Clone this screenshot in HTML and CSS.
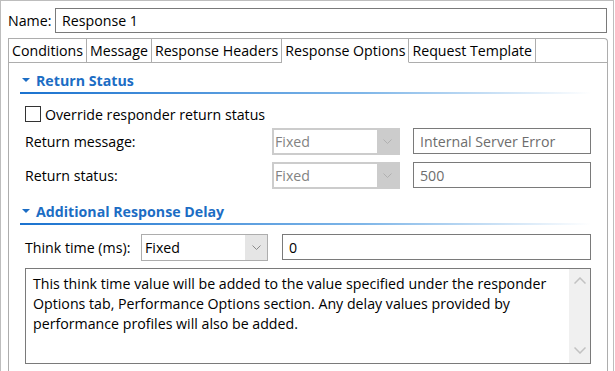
FILE: index.html
```html
<!DOCTYPE html>
<html lang="en">
<head>
<meta charset="UTF-8" />
<title>Response 1</title>
<link rel="stylesheet" href="styles.css">
</head>
<body>
<div class="window">
  <div class="name-row">
    <span class="name-label">Name:</span>
    <div class="field grow">Response 1</div>
  </div>

  <div class="tabs">
    <div class="tab-strip">
      <div class="tab">Conditions</div>
      <div class="tab">Message</div>
      <div class="tab">Response Headers</div>
      <div class="tab active">Response Options</div>
      <div class="tab">Request Template</div>
      <div class="tab-fill"></div>
    </div>

    <div class="panel">
      <div class="section-head"><span class="twisty"></span>Return Status</div>

      <div class="check-row">
        <span class="box"></span>Override responder return status
      </div>

      <div class="form-row status-row first">
        <span class="lbl">Return message:</span>
        <div class="combo disabled">
          <span class="val">Fixed</span>
          <span class="arrow"><svg width="9" height="5" viewBox="0 0 9 5"><polyline points="0.5,0.5 4.5,4.5 8.5,0.5" /></svg></span>
        </div>
        <div class="field grow disabled">Internal Server Error</div>
      </div>

      <div class="form-row status-row">
        <span class="lbl">Return status:</span>
        <div class="combo disabled">
          <span class="val">Fixed</span>
          <span class="arrow"><svg width="9" height="5" viewBox="0 0 9 5"><polyline points="0.5,0.5 4.5,4.5 8.5,0.5" /></svg></span>
        </div>
        <div class="field grow disabled">500</div>
      </div>

      <div class="section-head second"><span class="twisty"></span>Additional Response Delay</div>

      <div class="form-row think-row">
        <span class="lbl">Think time (ms):</span>
        <div class="combo">
          <span class="val">Fixed</span>
          <span class="arrow"><svg width="9" height="5" viewBox="0 0 9 5"><polyline points="0.5,0.5 4.5,4.5 8.5,0.5" /></svg></span>
        </div>
        <div class="field grow">0</div>
      </div>

      <div class="memo">
        <div class="memo-text">This think time value will be added to the value specified under the responder Options tab, Performance Options section. Any delay values provided by performance profiles will also be added.</div>
        <div class="scroll">
          <svg width="12" height="7" viewBox="0 0 12 7"><polyline points="0.5,6.5 6,1 11.5,6.5" /></svg>
          <svg width="12" height="7" viewBox="0 0 12 7"><polyline points="0.5,0.5 6,6 11.5,0.5" /></svg>
        </div>
      </div>
    </div>
  </div>
</div>
</body>
</html>
```

FILE: styles.css
```css
body{margin:0;padding:0;font-family:"Open Sans","Liberation Sans",sans-serif;font-size:14.2px;color:#000;background:#fff;}
.window{box-sizing:border-box;width:614px;height:371px;border:1px solid #bdbdbd;border-bottom:none;padding:7px 5px 0 7px;display:flex;flex-direction:column;}

.name-row{display:flex;align-items:center;margin-right:1px;}
.name-label{width:47px;}
.field{box-sizing:border-box;height:25px;border:1px solid #7a7a7a;padding:0 6px;display:flex;align-items:center;white-space:nowrap;}
.grow{flex:1;}
.field.disabled{color:#6d6d6d;}

.tabs{flex:1;margin-top:5px;border:1px solid #adadad;border-bottom:none;border-top-right-radius:4px;}
.tab-strip{display:flex;height:24px;}
.tab{padding:0 3px;line-height:23px;border-right:1px solid #adadad;border-bottom:1px solid #adadad;white-space:nowrap;}
.tab.active{border-bottom-color:transparent;}
.tab-fill{flex:1;border-bottom:1px solid #adadad;}

.panel{padding:0 16px;display:flex;flex-direction:column;}
.section-head{display:flex;align-items:center;height:20px;margin:7px 0 5px -5px;font-weight:bold;color:#1c6dc4;position:relative;}
.section-head::after{content:"";position:absolute;left:0;right:0;bottom:-4px;height:2px;background:linear-gradient(to right,#1a72cf,#7fb6e8 60%,#fff);}
.section-head.second{margin-top:11px;}
.twisty{width:0;height:0;margin:0 6px 0 2px;border-left:4px solid transparent;border-right:4px solid transparent;border-top:4px solid #1c6dc4;}

.check-row{display:flex;align-items:center;height:20px;margin-top:9px;}
.box{box-sizing:border-box;width:16px;height:16px;border:1px solid #333;margin-right:4px;}

.form-row{display:flex;align-items:flex-start;}
.status-row{margin-top:6px;}
.status-row.first{margin-top:4px;}
.status-row .lbl{width:247px;}
.status-row .combo{width:128px;margin-right:13px;}
.think-row{margin-top:8px;}
.think-row .lbl{width:116px;}
.think-row .combo{width:127px;margin-right:14px;}
.lbl{line-height:28px;}
.form-row .field{height:26px;}

.combo{box-sizing:border-box;height:27px;display:flex;border:1px solid #adadad;}
.combo .val{flex:1;display:flex;align-items:center;padding-left:3px;}
.combo .arrow{width:22px;background:#e5e5e5;display:flex;align-items:center;justify-content:center;}
.combo svg polyline{fill:none;stroke:#8a8a8a;stroke-width:1;}
.combo.disabled{border:2px solid #cccccc;color:#838383;}
.combo.disabled .val{padding-left:1px;}
.combo.disabled .arrow{width:21px;background:#cccccc;}
.combo.disabled svg polyline{stroke:#b0b0b0;}

.memo{box-sizing:border-box;height:96px;margin-top:6px;border:1px solid #7a7a7a;display:flex;}
.memo-text{flex:1;padding:5px 8px 0 7px;line-height:20px;}
.scroll{width:21px;background:#f0f0f0;display:flex;flex-direction:column;justify-content:space-between;align-items:center;padding:8px 0 9px;box-sizing:border-box;}
.scroll svg polyline{fill:none;stroke:#c2c2c2;stroke-width:1.5;}
```
